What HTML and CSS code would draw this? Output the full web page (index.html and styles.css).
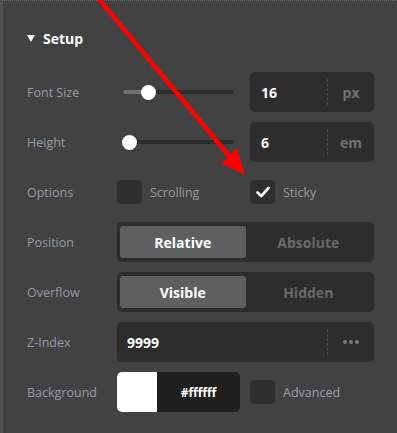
FILE: index.html
```html
<!DOCTYPE html>
<html>
<head>
<meta charset="utf-8">
<link rel="stylesheet" href="styles.css">
</head>
<body>
<div class="panel">
  <div class="header"><span class="tri"></span><span class="title">Setup</span></div>
  <div class="grid">
    <div class="label">Font Size</div>
    <div class="pair">
      <div class="slider"><div class="track"><div class="fill" style="width:25px"></div><div class="knob" style="left:25px"></div></div></div>
      <div class="input"><span class="val">16</span><span class="sep"></span><span class="unit">px</span></div>
    </div>

    <div class="label">Height</div>
    <div class="pair">
      <div class="slider"><div class="track"><div class="fill" style="width:6px"></div><div class="knob" style="left:6px"></div></div></div>
      <div class="input"><span class="val">6</span><span class="sep"></span><span class="unit">em</span></div>
    </div>

    <div class="label">Options</div>
    <div class="pair">
      <div class="check"><span class="box"></span><span class="clabel">Scrolling</span></div>
      <div class="check"><span class="box"><svg class="tick" viewBox="0 0 14 12" width="14" height="12"><path d="M1.5 6.5 L5.2 10 L12.5 2" fill="none" stroke="#fff" stroke-width="2.6" stroke-linecap="round" stroke-linejoin="round"/></svg></span><span class="clabel">Sticky</span></div>
    </div>

    <div class="label">Position</div>
    <div class="seg"><div class="opt active">Relative</div><div class="opt">Absolute</div></div>

    <div class="label">Overflow</div>
    <div class="seg"><div class="opt active">Visible</div><div class="opt">Hidden</div></div>

    <div class="label">Z-Index</div>
    <div class="input wide"><span class="val">9999</span><span class="sep"></span><span class="dots"><i></i><i></i><i></i></span></div>

    <div class="label">Background</div>
    <div class="pair">
      <div class="color"><span class="swatch"></span><span class="hex">#ffffff</span></div>
      <div class="check"><span class="box"></span><span class="clabel blue">Advanced</span></div>
    </div>
  </div>
</div>
<svg class="arrow" width="397" height="433" viewBox="0 0 397 433">
  <line x1="98" y1="-2" x2="230" y2="157" stroke="#ff0000" stroke-width="4.5"/>
  <polygon points="245,175 221.5,163.5 237,148" fill="#ff0000"/>
</svg>
</body>
</html>
```

FILE: styles.css
```css
html, body {
  margin: 0;
  padding: 0;
  background: #424242;
}
body {
  width: 397px;
  height: 433px;
  overflow: hidden;
  position: relative;
  font-family: "Open Sans", "Noto Sans", sans-serif;
}
.panel {
  box-sizing: border-box;
  width: 397px;
  height: 433px;
  border-left: 3px solid #505050;
  border-top: 1px dotted #6a6a6a;
  padding: 24px 23px 0 24px;
  background: #424242;
}
.header {
  display: flex;
  align-items: center;
  height: 26px;
  gap: 8px;
  margin-bottom: 21px;
}
.tri {
  width: 0;
  height: 0;
  border-left: 4px solid transparent;
  border-right: 4px solid transparent;
  border-top: 7px solid #fff;
}
.title {
  color: #fff;
  font-weight: 700;
  font-size: 14px;
}
.grid {
  display: grid;
  grid-template-columns: 90px 257px;
  grid-auto-rows: 40px;
  row-gap: 10px;
}
.label {
  display: flex;
  align-items: center;
  color: #959ea8;
  font-size: 12.5px;
}
.pair {
  display: grid;
  grid-template-columns: 123px 124px;
  column-gap: 10px;
}
.slider {
  display: flex;
  align-items: center;
  padding: 0 6px;
}
.track {
  position: relative;
  flex: 1;
  height: 4px;
  border-radius: 2px;
  background: #2c2c2c;
}
.fill {
  height: 4px;
  border-radius: 2px 0 0 2px;
  background: #707070;
}
.knob {
  position: absolute;
  top: -5.5px;
  width: 15px;
  height: 15px;
  margin-left: -7.5px;
  border-radius: 50%;
  background: #fff;
}
.input {
  display: flex;
  align-items: center;
  background: #2d2d2d;
  border-radius: 5px;
}
.val {
  flex: 1;
  padding-left: 11px;
  color: #fff;
  font-weight: 700;
  font-size: 14px;
}
.sep {
  width: 0;
  height: 26px;
  border-left: 1px dashed #4a4a4a;
}
.unit {
  width: 46px;
  text-align: center;
  color: #727272;
  font-weight: 700;
  font-size: 14px;
}
.wide .val { padding-left: 10px; }
.dots {
  width: 46px;
  display: flex;
  justify-content: center;
  gap: 2px;
}
.dots i {
  width: 4px;
  height: 4px;
  border-radius: 50%;
  background: #7a7a7a;
}
.check {
  display: flex;
  align-items: center;
  gap: 8px;
}
.box {
  width: 25px;
  height: 24px;
  border-radius: 4px;
  background: #2e2e2e;
  display: flex;
  align-items: center;
  justify-content: center;
}
.clabel {
  color: #9a9a9a;
  font-size: 12.5px;
}
.clabel.blue { color: #9aa4ae; }
.seg {
  display: flex;
  padding: 4px 3px;
  gap: 0;
  background: #2d2d2d;
  border-radius: 5px;
}
.opt {
  flex: 1;
  display: flex;
  align-items: center;
  justify-content: center;
  color: #6a6a6a;
  font-weight: 700;
  font-size: 14px;
  border-radius: 3px;
}
.opt.active {
  background: #5f5f5f;
  color: #fff;
}
.color {
  display: flex;
  background: #1f1f1f;
  border-radius: 5px;
  overflow: hidden;
}
.swatch {
  width: 40px;
  background: #fff;
}
.hex {
  flex: 1;
  display: flex;
  align-items: center;
  justify-content: center;
  color: #fff;
  font-weight: 700;
  font-size: 12px;
}
.arrow {
  position: absolute;
  left: 0;
  top: 0;
  pointer-events: none;
}
```
